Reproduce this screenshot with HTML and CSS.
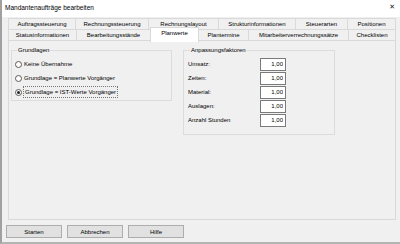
FILE: index.html
```html
<!DOCTYPE html>
<html lang="de">
<head>
  <meta charset="UTF-8">
  <title>Mandantenaufträge bearbeiten</title>
  <link rel="stylesheet" href="styles.css">
</head>
<body>
  <div class="window">
    <div class="titlebar">
      <span class="title">Mandantenaufträge bearbeiten</span>
      <span class="close">✕</span>
    </div>
    <div class="content">
      <div class="tabs">
        <div class="tab-row">
          <div class="tab" style="width: 68px">Auftragssteuerung</div>
          <div class="tab" style="width: 74px">Rechnungssteuerung</div>
          <div class="tab" style="width: 71px">Rechnungslayout</div>
          <div class="tab" style="width: 78px">Strukturinformationen</div>
          <div class="tab" style="width: 53px">Steuerarten</div>
          <div class="tab" style="width: 49px">Positionen</div>
        </div>
        <div class="tab-row">
          <div class="tab" style="width: 69px">Statusinformationen</div>
          <div class="tab" style="width: 75px">Bearbeitungsstände</div>
          <div class="tab active" style="width: 49px">Planwerte</div>
          <div class="tab" style="width: 51px">Plantermine</div>
          <div class="tab" style="width: 101px">Mitarbeiterverrechnungssätze</div>
          <div class="tab" style="width: 48px">Checklisten</div>
        </div>
      </div>
      <div class="panel">
        <fieldset class="group group-basis">
          <legend>Grundlagen</legend>
          <label class="radio-row"><span class="radio"></span>Keine Übernahme</label>
          <label class="radio-row"><span class="radio"></span>Grundlage = Planwerte Vorgänger</label>
          <label class="radio-row"><span class="radio checked"></span><span class="focus">Grundlage = IST-Werte Vorgänger</span></label>
        </fieldset>
        <fieldset class="group group-factors">
          <legend>Anpassungsfaktoren</legend>
          <div class="field-row"><span class="field-label">Umsatz:</span><input type="text" value="1,00"></div>
          <div class="field-row"><span class="field-label">Zeiten:</span><input type="text" value="1,00"></div>
          <div class="field-row"><span class="field-label">Material:</span><input type="text" value="1,00"></div>
          <div class="field-row"><span class="field-label">Auslagen:</span><input type="text" value="1,00"></div>
          <div class="field-row"><span class="field-label">Anzahl Stunden</span><input type="text" value="1,00"></div>
        </fieldset>
      </div>
      <div class="buttons">
        <button>Starten</button>
        <button>Abbrechen</button>
        <button>Hilfe</button>
      </div>
    </div>
  </div>
</body>
</html>
```

FILE: styles.css
```css
* {
    margin: 0;
    padding: 0;
    box-sizing: border-box;
    font-family: 'Liberation Sans', Arial, sans-serif;
}

body {
    width: 400px;
    height: 244px;
    overflow: hidden;
    background: #f0f0f0;
    color: #000;
}

.window {
    height: 244px;
    border-left: 2px solid #a0a0a0;
    border-bottom: 2px solid #b4b4b4;
    background: #f0f0f0;
}

.titlebar {
    height: 17px;
    background: #fff;
    display: flex;
    justify-content: space-between;
    align-items: center;
    padding: 0 5px 3px 3px;
}

.title {
    font-size: 6.5px;
}

.close {
    font-family: 'DejaVu Sans', sans-serif;
    font-size: 7px;
    color: #222;
}

.content {
    padding: 1px 0 0 4px;
}

.tabs {
    margin-left: 2px;
}

.tab-row {
    display: flex;
    align-items: flex-start;
}

.tab-row + .tab-row {
    margin-top: -1px;
}

.tab {
    height: 12px;
    margin-right: -1px;
    border: 1px solid #d9d9d9;
    background: #f0f0f0;
    font-size: 6px;
    line-height: 10px;
    text-align: center;
    white-space: nowrap;
}

.tab.active {
    position: relative;
    z-index: 1;
    height: 15px;
    margin-top: -2px;
    margin-bottom: -1px;
    background: #fff;
    border-bottom: none;
    line-height: 11px;
}

.panel {
    width: 388px;
    height: 180px;
    margin: -1px 0 0 2px;
    border: 1px solid #d9d9d9;
    display: flex;
    align-items: flex-start;
    gap: 11px;
    padding: 5px 0 0 2px;
}

.group {
    border: 1px solid #dcdcdc;
    font-size: 6px;
}

.group legend {
    font-size: 6px;
    line-height: 8px;
    padding: 0 1px;
    margin-left: 2px;
}

.group-basis {
    width: 161px;
    padding: 3px 0 1px 3px;
}

.radio-row {
    display: flex;
    align-items: center;
    height: 14px;
    white-space: nowrap;
}

.radio {
    width: 7px;
    height: 7px;
    margin-right: 2px;
    border: 1px solid #5a5a5a;
    border-radius: 50%;
    background: #fff;
    display: flex;
    justify-content: center;
    align-items: center;
}

.radio.checked::after {
    content: '';
    width: 3px;
    height: 3px;
    border-radius: 50%;
    background: #222;
}

.focus {
    outline: 1px dotted #777;
    padding: 1px 1px;
    line-height: 8px;
}

.group-factors {
    width: 152px;
    padding: 3px 0 7px 4px;
}

.field-row {
    display: flex;
    align-items: center;
    height: 14px;
}

.field-label {
    width: 72px;
}

.field-row input {
    width: 26px;
    height: 13px;
    border: 1px solid #7a7a7a;
    background: #fff;
    font-size: 6px;
    text-align: right;
    padding-right: 2px;
}

.buttons {
    display: flex;
    gap: 5px;
    margin-top: 5px;
}

button {
    width: 56px;
    height: 13px;
    border: 1px solid #adadad;
    background: #e1e1e1;
    font-size: 6px;
}
```
